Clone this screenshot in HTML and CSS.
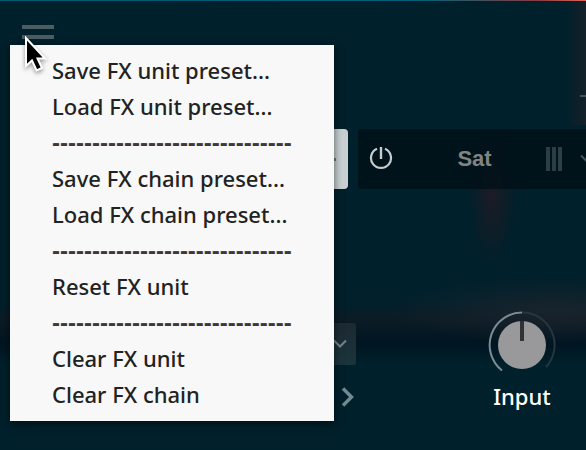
FILE: index.html
```
<!DOCTYPE html>
<html lang="en">
<head>
    <meta charset="UTF-8">
    <meta name="viewport" content="width=device-width, initial-scale=1.0">
    <title>FX Chain</title>
    <link rel="stylesheet" href="styles.css">
</head>
<body>
    <main class="rack">
        <header class="toolbar">
            <button class="menu-button" type="button" aria-label="FX menu" aria-haspopup="menu" aria-expanded="true">
                <span class="menu-bar"></span>
                <span class="menu-bar"></span>
            </button>
            <span class="dash"></span>
        </header>

        <section class="slots">
            <div class="slot slot-active">
                <span class="slot-mark"></span>
            </div>
            <div class="slot">
                <button class="icon-button" type="button" aria-label="Power">
                    <svg width="24" height="24" viewBox="0 0 24 24" fill="none" stroke="#c5cccd" stroke-width="2.2">
                        <path d="M8 1.8A10 10 0 1 0 16 1.8"/>
                        <path d="M12 0V12" stroke-width="2.4"/>
                    </svg>
                </button>
                <span class="slot-name">Sat</span>
                <span class="grip"></span>
                <button class="icon-button" type="button" aria-label="Choose effect">
                    <svg width="14" height="10" viewBox="0 0 14 10" fill="none" stroke="#44545a" stroke-width="2">
                        <path d="M1 1.5L7 7.5L13 1.5"/>
                    </svg>
                </button>
            </div>
        </section>

        <section class="controls">
            <div class="presets">
                <div class="select-wrap">
                    <select class="preset-select" aria-label="Preset"></select>
                    <svg class="select-arrow" width="14" height="10" viewBox="0 0 14 10" fill="none" stroke="#71858a" stroke-width="2">
                        <path d="M1 1.5L7 7.5L13 1.5"/>
                    </svg>
                </div>
                <button class="icon-button" type="button" aria-label="Next preset">
                    <svg width="14" height="20" viewBox="0 0 14 20" fill="none" stroke="#728b91" stroke-width="3.4">
                        <path d="M2 1.5L10.5 10L2 18.5"/>
                    </svg>
                </button>
            </div>
            <div class="knob">
                <svg width="72" height="72" viewBox="0 0 72 72" fill="none" role="img" aria-label="Input level">
                    <path d="M36 3.5A32.5 32.5 0 0 1 60 58" stroke="#263740" stroke-width="2"/>
                    <path d="M16 61.5A32.5 32.5 0 0 1 36 3.5" stroke="#7a8b91" stroke-width="2"/>
                    <circle cx="36" cy="36" r="24" fill="#99999b"/>
                    <path d="M36 12V32" stroke="#303334" stroke-width="4"/>
                </svg>
                <span class="knob-label">Input</span>
            </div>
        </section>
    </main>

    <div class="menu" role="menu">
        <button class="menu-item" type="button" role="menuitem">Save FX unit preset...</button>
        <button class="menu-item" type="button" role="menuitem">Load FX unit preset...</button>
        <div class="menu-separator" role="separator">------------------------------</div>
        <button class="menu-item" type="button" role="menuitem">Save FX chain preset...</button>
        <button class="menu-item" type="button" role="menuitem">Load FX chain preset...</button>
        <div class="menu-separator" role="separator">------------------------------</div>
        <button class="menu-item" type="button" role="menuitem">Reset FX unit</button>
        <div class="menu-separator" role="separator">------------------------------</div>
        <button class="menu-item" type="button" role="menuitem">Clear FX unit</button>
        <button class="menu-item" type="button" role="menuitem">Clear FX chain</button>
    </div>

    <svg class="cursor" width="24" height="38" viewBox="0 0 24 38">
        <path d="M2 2V30L8 24.5L12.6 34.4L18 32L13.5 22.5H21Z" fill="#000" stroke="#fff" stroke-width="2"/>
    </svg>
</body>
</html>
```
FILE: styles.css
```
* {
    box-sizing: border-box;
}

body {
    margin: 0;
    overflow: hidden;
    background-color: #00202b;
    font-family: "Noto Sans", sans-serif;
}

button {
    padding: 0;
    border: none;
    background: none;
    font: inherit;
    color: inherit;
}

svg {
    display: block;
}

.rack {
    min-height: 100vh;
    /* dim reddish glow behind the panel */
    background:
        linear-gradient(to right, #005a74, #006078 72%, #8a3c42 92%, #e0655c) top / 100% 1px no-repeat,
        linear-gradient(to left, rgba(32, 32, 38, 0.7), transparent 20px) top / 100% 125px no-repeat,
        radial-gradient(24px 70px at 84% 195px, rgba(36, 26, 36, 0.8), transparent),
        radial-gradient(170px 34px at 95% 310px, rgba(32, 37, 46, 0.75), transparent),
        linear-gradient(to bottom, transparent 300px, rgba(14, 26, 36, 0.8) 320px, rgba(0, 19, 31, 0.8) 342px, transparent 364px),
        #00202b;
}

.toolbar {
    height: 129px;
    padding: 25px 0 0 22px;
    display: flex;
    justify-content: space-between;
    align-items: flex-start;
}

.menu-button {
    width: 32px;
    display: flex;
    flex-direction: column;
    gap: 6px;
}

.menu-bar {
    width: 100%;
    height: 4px;
    background-color: #4b5c63;
}

.dash {
    width: 6px;
    height: 2px;
    margin-top: 70px;
    background-color: #46545a;
}

.slots {
    display: flex;
    gap: 10px;
    padding-left: 106px;
}

.slot {
    flex: none;
    width: 242px;
    height: 60px;
    padding: 0 6px 0 11px;
    display: flex;
    align-items: center;
    border-radius: 3px;
    background-color: rgba(0, 15, 21, 0.75);
}

.slot-active {
    padding-right: 12px;
    justify-content: flex-end;
    border-radius: 4px;
    background-color: #c8d0d2;
}

.slot-mark {
    width: 12px;
    height: 3px;
    background-color: #6f7a7d;
}

.slot-name {
    flex: 1;
    padding-left: 10px;
    font-family: "Liberation Sans", sans-serif;
    font-size: 22px;
    font-weight: bold;
    text-align: center;
    color: #808486;
}

.grip {
    width: 16px;
    height: 24px;
    margin-right: 18px;
    background: repeating-linear-gradient(to right, #2d3d44 0 4px, transparent 4px 6px);
}

.controls {
    padding: 120px 28px 0 106px;
    display: flex;
    justify-content: space-between;
    align-items: flex-start;
}

.presets {
    width: 250px;
    padding-top: 14px;
    display: flex;
    flex-direction: column;
    align-items: flex-end;
    gap: 22px;
}

.presets .icon-button {
    margin-right: 1px;
}

.select-wrap {
    width: 100%;
    display: grid;
    align-items: center;
}

.preset-select {
    grid-area: 1 / 1;
    width: 100%;
    height: 42px;
    appearance: none;
    border: none;
    border-radius: 3px;
    background: linear-gradient(#1b2a33, #1b343c);
}

.select-arrow {
    grid-area: 1 / 1;
    justify-self: end;
    margin-right: 9px;
    pointer-events: none;
}

.knob {
    display: flex;
    flex-direction: column;
    align-items: center;
}

.knob-label {
    font-size: 22px;
    line-height: 30px;
    font-weight: 500;
    color: #fff;
}

.menu {
    position: absolute;
    top: 45px;
    left: 10px;
    width: 324px;
    padding: 7px 0 9px;
    background-color: #f8f8f8;
    box-shadow: 0 2px 8px rgba(0, 0, 0, 0.6);
    color: #222;
}

.menu-item,
.menu-separator {
    display: block;
    width: 100%;
    height: 36px;
    padding-left: 42px;
    font-size: 22px;
    line-height: 36px;
    font-weight: 500;
    text-align: left;
    white-space: nowrap;
}

.menu-item:hover {
    background-color: #dde5e8;
}

.menu-separator {
    font-family: "Liberation Sans", sans-serif;
    font-size: 24px;
    line-height: 38px;
    font-weight: bold;
    color: #3a3a3a;
}

.cursor {
    position: absolute;
    top: 36px;
    left: 24px;
    filter: drop-shadow(0 2px 2px rgba(0, 0, 0, 0.4));
    pointer-events: none;
}
```
